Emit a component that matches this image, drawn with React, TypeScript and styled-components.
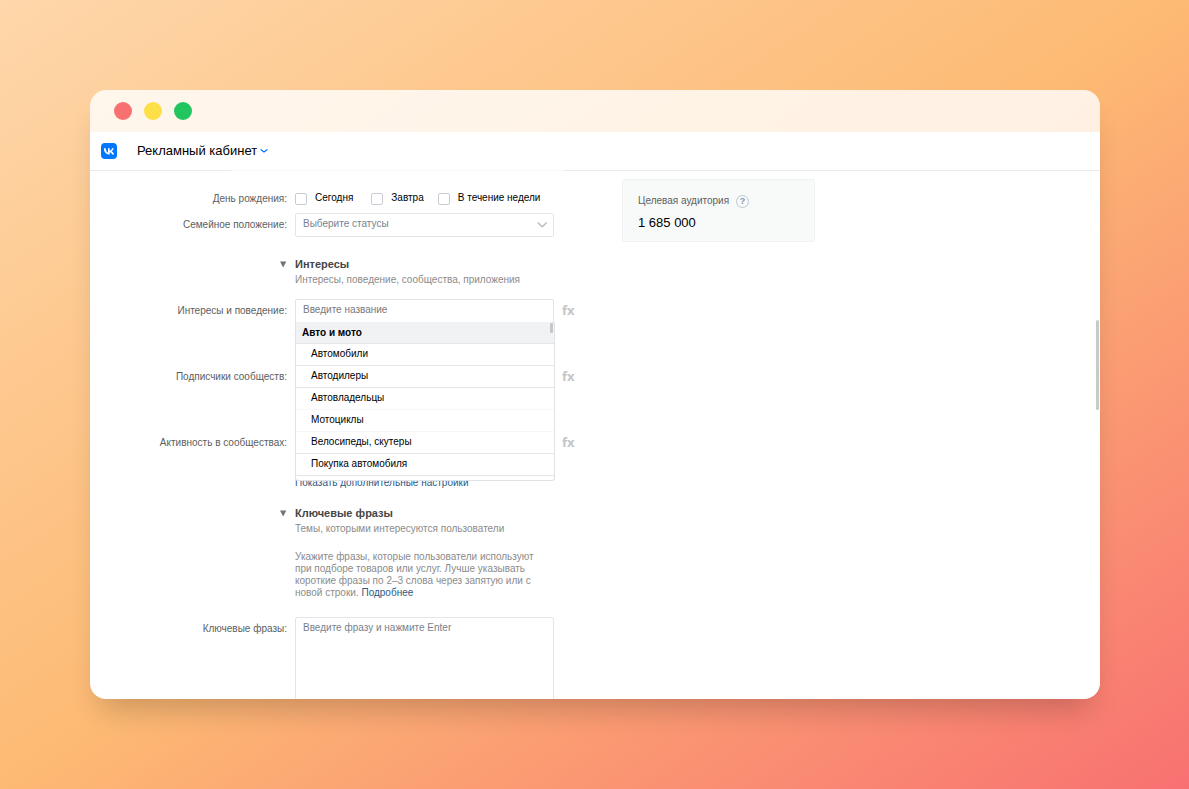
import React from "react";
import styled, { createGlobalStyle } from "styled-components";

const GlobalStyle = createGlobalStyle`
  *, *::before, *::after { box-sizing: border-box; }
  body {
    margin: 0;
    font-family: "Liberation Sans", Arial, sans-serif;
    font-size: 10px;
    line-height: 12px;
    color: #000;
  }
  button, input, select, textarea { font: inherit; color: inherit; }
`;

const Backdrop = styled.div`
  display: flex;
  height: 100vh;
  padding: 90px 89px 90px 90px;
  background: linear-gradient(to bottom right, #fed7aa, #fdba74, #f87171);
`;

const Window = styled.div`
  display: flex;
  flex: 1;
  flex-direction: column;
  min-width: 0;
  overflow: hidden;
  border-radius: 16px;
  box-shadow: 0 20px 30px -10px rgba(0, 0, 0, 0.2);
`;

const TitleBar = styled.div`
  display: flex;
  flex: none;
  align-items: center;
  gap: 12px;
  height: 42px;
  padding: 0 24px;
  background: rgba(255, 255, 255, 0.8);
`;

const Dot = styled.span<{ $color: string }>`
  width: 18px;
  height: 18px;
  border-radius: 50%;
  background: ${(p) => p.$color};
`;

const Header = styled.header`
  display: flex;
  flex: none;
  align-items: center;
  gap: 20px;
  height: 39px;
  padding: 0 11px 1px;
  background:
    linear-gradient(to right, #e9eaec 14%, #f7f8f9 14%, #f7f8f9 47%, #e6e9ed 47%) bottom / 100% 1px no-repeat,
    #fff;
`;

const LogoLink = styled.a`
  display: flex;
`;

const CabinetButton = styled.button`
  display: flex;
  align-items: center;
  gap: 3px;
  padding: 0;
  border: 0;
  background: none;
  font-size: 13px;
  line-height: 16px;
`;

const Body = styled.div`
  display: flex;
  flex: 1;
  align-items: flex-start;
  gap: 48px;
  min-height: 0;
  padding: 8px 1px 0 0;
  overflow: hidden;
  background: #fff;
`;

const Form = styled.form`
  display: flex;
  flex: none;
  flex-direction: column;
  width: 484px;
  padding-top: 8px;
`;

const Row = styled.div<{ $gap?: number }>`
  display: grid;
  grid-template-columns: 197px 259px 12px;
  column-gap: 8px;
  align-items: start;
  margin-bottom: ${(p) => p.$gap ?? 0}px;
`;

const Label = styled.label`
  padding-top: 6px;
  color: #5c5e60;
  text-align: right;
  white-space: nowrap;
`;

const CheckGroup = styled.div`
  display: flex;
  align-items: flex-start;
  height: 26px;
  padding-top: 5px;
`;

const CheckLabel = styled.label<{ $gap?: number }>`
  display: flex;
  gap: 8px;
  margin-right: ${(p) => p.$gap ?? 0}px;
  white-space: nowrap;
`;

const Checkbox = styled.input`
  flex: none;
  width: 12px;
  height: 12px;
  margin: 1px 0 0;
  appearance: none;
  border: 1px solid #c8cdd4;
  border-radius: 2px;
  background: #fff;
`;

const SelectWrap = styled.div`
  display: grid;
  align-items: center;
  justify-items: end;
  > * { grid-area: 1 / 1; }
  svg { margin-right: 7px; pointer-events: none; }
`;

const StatusSelect = styled.select`
  width: 100%;
  height: 24px;
  padding: 0 7px 3px;
  appearance: none;
  border: 1px solid #e3e5e8;
  border-radius: 2px;
  background: #fff;
  color: #78828f;
`;

const SectionHead = styled.div<{ $gap?: number }>`
  display: grid;
  grid-template-columns: 197px 1fr;
  column-gap: 8px;
  margin-bottom: ${(p) => p.$gap ?? 0}px;
`;

const SectionToggle = styled.button`
  display: flex;
  align-items: flex-start;
  justify-content: flex-end;
  padding: 4px 0 0;
  border: 0;
  background: none;
`;

const SectionTitle = styled.h2`
  margin: 0;
  color: #454647;
  font-size: 11px;
  line-height: 15px;
`;

const Hint = styled.p`
  margin: 0;
  color: #8b8b8b;
  line-height: 15px;
`;

const Note = styled.p`
  width: 250px;
  margin: 15px 0 18px 205px;
  color: #8b8b8b;
`;

const Link = styled.a`
  color: #2a5885;
  text-decoration: none;
`;

const MoreLink = styled(Link)`
  align-self: flex-start;
  margin: 0 0 17px 205px;
`;

const Combo = styled.div`
  position: relative;
`;

const TextInput = styled.input`
  display: block;
  width: 100%;
  height: 24px;
  padding: 0 7px 3px;
  border: 1px solid #e1e3e6;
  border-radius: 2px;
  background: #fff;
  &::placeholder { color: #75797c; opacity: 1; }
`;

const Menu = styled.ul`
  position: absolute;
  z-index: 1;
  top: 23px;
  left: 0;
  width: 260px;
  height: 159px;
  margin: 0;
  padding: 0;
  overflow: hidden;
  border: 1px solid #dfe2e6;
  border-top: 0;
  border-radius: 0 0 3px 3px;
  background: #fff;
  list-style: none;
`;

const MenuItem = styled.li<{ $faint?: boolean }>`
  height: 22px;
  padding: 4px 15px 0;
  border-bottom: 1px solid ${(p) => (p.$faint ? "#f6f7f8" : "#e4e6e9")};
`;

const MenuGroup = styled.li`
  display: flex;
  justify-content: space-between;
  height: 22px;
  padding: 5px 1px 0 6px;
  border-bottom: 1px solid #e4e6e9;
  background: #f0f2f4;
  font-weight: bold;
  &::after {
    width: 3px;
    height: 10px;
    margin-top: -4px;
    border-radius: 1px;
    background: #c4c6c8;
    content: "";
  }
`;

const FormulaButton = styled.button`
  padding: 4px 0 0;
  border: 0;
  background: none;
  color: #c3c5c8;
  font-family: "Noto Sans", sans-serif;
  font-size: 13px;
  font-weight: bold;
  line-height: 14px;
`;

const Phrases = styled.textarea`
  width: 100%;
  height: 120px;
  padding: 4px 7px;
  resize: none;
  border: 1px solid #e3e5e8;
  border-radius: 2px;
  &::placeholder { color: #78828f; opacity: 1; }
`;

const Audience = styled.aside`
  width: 193px;
  height: 63px;
  padding: 14px 15px;
  border: 1px solid #eff2f4;
  border-radius: 2px;
  background: #f8faf9;
`;

const AudienceTitle = styled.div`
  display: flex;
  align-items: center;
  gap: 7px;
  height: 14px;
  color: #5c5e60;
`;

const HelpButton = styled.button`
  width: 13px;
  height: 13px;
  padding: 0;
  border: 1px solid #bac7d5;
  border-radius: 50%;
  background: none;
  color: #8293a6;
  font-size: 9px;
  font-weight: bold;
  line-height: 11px;
`;

const AudienceValue = styled.div`
  margin-top: 7px;
  font-size: 13px;
  line-height: 16px;
`;

const ScrollThumb = styled.div`
  width: 3px;
  height: 90px;
  margin: 141px 0 0 auto;
  border-radius: 2px;
  background: #c9c9c9;
`;

const VkLogo = () => (
  <svg width="16" height="16" viewBox="0 0 16 16" aria-label="VK">
    <rect width="16" height="16" rx="4" fill="#0077ff" />
    <path
      fill="#fff"
      d="M8.5 11.5C5 11.5 3 9.100 2.900 5.200h1.800c.05 2.850 1.300 4.050 2.300 4.300V5.200h1.700v2.450c1-.1 2.050-1.200 2.400-2.450h1.650c-.3 1.550-1.450 2.650-2.250 3.150.8.4 2.100 1.350 2.600 3.150h-1.850c-.4-1.200-1.350-2.150-2.550-2.250v2.250z"
    />
  </svg>
);

const CabinetChevron = () => (
  <svg width="8" height="8" viewBox="0 0 8 8" fill="none" stroke="#0077ff" strokeWidth="1.2" strokeLinecap="round" strokeLinejoin="round">
    <path d="M1 2.700L4 5L7 2.700" />
  </svg>
);

const SelectChevron = () => (
  <svg width="10" height="8" viewBox="0 0 10 8" fill="none" stroke="#b8bbbf" strokeWidth="1.500" strokeLinecap="round" strokeLinejoin="round">
    <path d="M1.200 2L5.200 5.700L9.200 2" />
  </svg>
);

const Triangle = () => (
  <svg width="8" height="7" viewBox="0 0 8 7">
    <path d="M1 0.500H7.300L4.150 6.500Z" fill="#707376" />
  </svg>
);

const Section = ({ title, hint, gap }: { title: string; hint: string; gap?: number }) => (
  <SectionHead $gap={gap}>
    <SectionToggle type="button" aria-label={title}>
      <Triangle />
    </SectionToggle>
    <div>
      <SectionTitle>{title}</SectionTitle>
      <Hint>{hint}</Hint>
    </div>
  </SectionHead>
);

const interests = [
  "Автомобили",
  "Автодилеры",
  "Автовладельцы",
  "Мотоциклы",
  "Велосипеды, скутеры",
  "Покупка автомобиля",
];

export default function App() {
  return (
    <Backdrop>
      <GlobalStyle />
      <Window>
        <TitleBar>
          <Dot $color="#f87171" />
          <Dot $color="#fde047" />
          <Dot $color="#22c55e" />
        </TitleBar>
        <Header>
          <LogoLink href="#"><VkLogo /></LogoLink>
          <CabinetButton type="button">
            Рекламный кабинет
            <CabinetChevron />
          </CabinetButton>
        </Header>
        <Body>
          <Form>
            <Row>
              <Label as="span" id="birthday">День рождения:</Label>
              <CheckGroup role="group" aria-labelledby="birthday">
                <CheckLabel $gap={18}><Checkbox type="checkbox" />Сегодня</CheckLabel>
                <CheckLabel $gap={14}><Checkbox type="checkbox" />Завтра</CheckLabel>
                <CheckLabel><Checkbox type="checkbox" />В течение недели</CheckLabel>
              </CheckGroup>
            </Row>
            <Row $gap={20}>
              <Label htmlFor="status">Семейное положение:</Label>
              <SelectWrap>
                <StatusSelect id="status">
                  <option>Выберите статусы</option>
                </StatusSelect>
                <SelectChevron />
              </SelectWrap>
            </Row>
            <Section title="Интересы" hint="Интересы, поведение, сообщества, приложения" gap={12} />
            <Row $gap={42}>
              <Label htmlFor="interests">Интересы и поведение:</Label>
              <Combo>
                <TextInput id="interests" placeholder="Введите название" />
                <Menu>
                  <MenuGroup>Авто и мото</MenuGroup>
                  {interests.map((name, i) => (
                    <MenuItem key={name} $faint={i === 2 || i === 3}>{name}</MenuItem>
                  ))}
                </Menu>
              </Combo>
              <FormulaButton type="button">fx</FormulaButton>
            </Row>
            <Row $gap={42}>
              <Label htmlFor="followers">Подписчики сообществ:</Label>
              <TextInput id="followers" />
              <FormulaButton type="button">fx</FormulaButton>
            </Row>
            <Row $gap={22}>
              <Label htmlFor="activity">Активность в сообществах:</Label>
              <TextInput id="activity" />
              <FormulaButton type="button">fx</FormulaButton>
            </Row>
            <MoreLink href="#">Показать дополнительные настройки</MoreLink>
            <Section title="Ключевые фразы" hint="Темы, которыми интересуются пользователи" />
            <Note>
              Укажите фразы, которые пользователи используют при подборе товаров или услуг. Лучше
              указывать короткие фразы по 2–3 слова через запятую или с новой строки.{" "}
              <Link href="#">Подробнее</Link>
            </Note>
            <Row>
              <Label htmlFor="phrases">Ключевые фразы:</Label>
              <Phrases id="phrases" placeholder="Введите фразу и нажмите Enter" />
            </Row>
          </Form>
          <Audience>
            <AudienceTitle>
              Целевая аудитория
              <HelpButton type="button" aria-label="Справка">?</HelpButton>
            </AudienceTitle>
            <AudienceValue>1 685 000</AudienceValue>
          </Audience>
          <ScrollThumb />
        </Body>
      </Window>
    </Backdrop>
  );
}
